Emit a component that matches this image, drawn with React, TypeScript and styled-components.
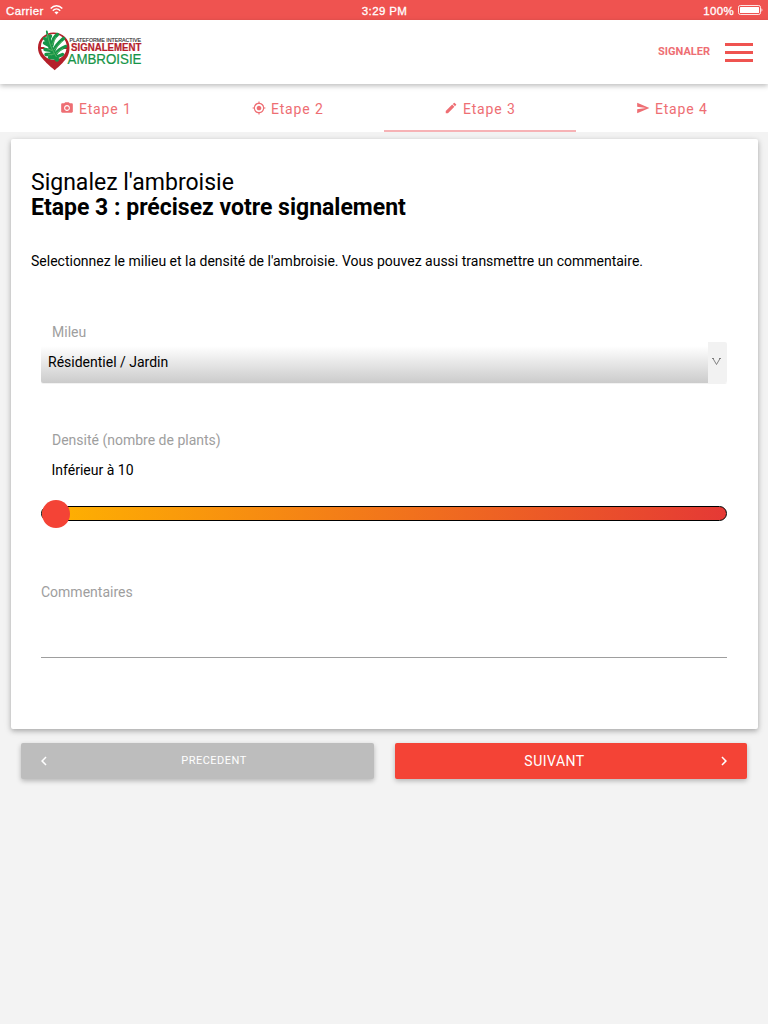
import { MdChevronLeft, MdChevronRight, MdEdit, MdGpsFixed, MdPhotoCamera, MdSend } from "react-icons/md";
import { IconType } from "react-icons";
import styled, { createGlobalStyle } from "styled-components";

const steps: { label: string; icon: IconType }[] = [
  { label: "Etape 1", icon: MdPhotoCamera },
  { label: "Etape 2", icon: MdGpsFixed },
  { label: "Etape 3", icon: MdEdit },
  { label: "Etape 4", icon: MdSend },
];

const Logo = () => (
  <svg width="106" height="44" viewBox="0 0 106 44" overflow="visible" fontFamily="'Liberation Sans', Arial, sans-serif">
    <path d="M16.500 2.500C7.500 2.500 1 9.500 1 17.500c0 7.500 4.500 11 8.500 15.500 3 3 5.800 5 8.200 7.300 2.300-2.300 5-4.300 7.800-7.300C29.500 28.500 32.500 25 32.500 17.500c0-8-6.500-15-16-15Z" fill="#b5202a" />
    <circle cx="16.800" cy="16.800" r="12.900" fill="#fff" />
    <path d="M1.500 18h6M27 18h5" stroke="#b5202a" strokeWidth="1.800" />
    <g fill="none" stroke="#169447" strokeLinecap="round" strokeLinejoin="round">
      <path d="M20 29.500C17 25 11.500 16 11.500 7" strokeWidth="4.500" />
      <path d="M11 8 9.800 1.500" strokeWidth="1.800" />
      <path d="M12 9l1.500-3M11.500 12 7.500 8.500M13 16l-5.500-3M15 15c.5-5 2-8 5.500-10.500M17 20c2-5 5-7.500 9.500-11.500M18.500 24c2.500-4 5-5.500 10-7.500M19.500 27l6-2.500M15 20.500l-7-1M17 24l-8 .5M19 28l-6.500-.5" strokeWidth="3.400" />
    </g>
    <path d="M10.500 4c1 8 4.500 16 9 23M15 15l4-8M17 20l8-9M19 23.500l7-5M15 20.500l-5-2M17 24l-6 1" stroke="#7cc576" strokeWidth=".6" fill="none" />
    <text x="32.500" y="11.500" fontSize="5" fill="#333" stroke="#333" strokeWidth=".15" textLength="71.500" lengthAdjust="spacingAndGlyphs">PLATEFORME INTERACTIVE</text>
    <text x="34" y="20.900" fontSize="10.200" fontWeight="700" fill="#b5202a" stroke="#b5202a" strokeWidth=".2" textLength="70.500" lengthAdjust="spacingAndGlyphs">SIGNALEMENT</text>
    <text x="30.500" y="33.500" fontSize="13.800" fill="#169447" stroke="#169447" strokeWidth=".2" textLength="74" lengthAdjust="spacingAndGlyphs">AMBROISIE</text>
  </svg>
);

const WifiIcon = () => (
  <svg width="13" height="10" viewBox="0 0 13 10" fill="none" stroke="#fff" strokeWidth="1.400">
    <path d="M.7 3.500C4-.2 9-.2 12.300 3.500M2.800 5.700c2.200-2.200 5.200-2.200 7.400 0" />
    <path d="M4.400 7.300 6.500 9.500l2.100-2.200c-1.200-1.100-3-1.100-4.200 0Z" fill="#fff" stroke="none" />
  </svg>
);

const BatteryIcon = () => (
  <svg width="25" height="10" viewBox="0 0 25 10">
    <rect x=".5" y=".5" width="22" height="9" rx="1.800" fill="none" stroke="#fff" strokeOpacity=".85" />
    <rect x="2" y="2" width="19" height="6" rx=".5" fill="#fff" />
    <path d="M23.500 3.300c1.200.5 1.200 2.900 0 3.400Z" fill="#fff" />
  </svg>
);

export default function App() {
  return (
    <>
      <GlobalStyle />
      <StatusBar>
        <StatusItem>
          Carrier <WifiIcon />
        </StatusItem>
        <StatusItem>3:29 PM</StatusItem>
        <StatusItem $end>
          100% <BatteryIcon />
        </StatusItem>
      </StatusBar>
      <Header>
        <Logo />
        <HeaderActions>
          <ReportLink>SIGNALER</ReportLink>
          <MenuButton aria-label="Menu">
            <span />
            <span />
            <span />
          </MenuButton>
        </HeaderActions>
      </Header>
      <Tabs>
        {steps.map(({ label, icon: Icon }, i) => (
          <Tab key={label} $active={i === 2}>
            <Icon size={14} />
            {label}
          </Tab>
        ))}
      </Tabs>
      <Card>
        <Title>
          Signalez l'ambroisie
          <br />
          <b>Etape 3 : précisez votre signalement</b>
        </Title>
        <Intro>Selectionnez le milieu et la densité de l'ambroisie. Vous pouvez aussi transmettre un commentaire.</Intro>
        <Form>
          <Label>Mileu</Label>
          <SelectField>
            <SelectValue>Résidentiel / Jardin</SelectValue>
            <SelectArrow>
              <svg width="9" height="7" viewBox="0 0 9 7" fill="none" stroke="#666" strokeWidth=".8">
                <path d="M0 .5h2M7 .5h2M1 .5l3.500 6L8 .5" />
              </svg>
            </SelectArrow>
          </SelectField>
          <DensityLabel>Densité (nombre de plants)</DensityLabel>
          <DensityValue>Inférieur à 10</DensityValue>
          <Slider>
            <Thumb />
          </Slider>
          <Comment>Commentaires</Comment>
        </Form>
      </Card>
      <Actions>
        <Button $small $color="#bdbdbd">
          <MdChevronLeft size={18} />
          <span>PRECEDENT</span>
        </Button>
        <Button $color="#f44336">
          <span>SUIVANT</span>
          <MdChevronRight size={18} />
        </Button>
      </Actions>
    </>
  );
}

const GlobalStyle = createGlobalStyle`
  * {
    box-sizing: border-box;
  }

  body {
    margin: 0;
    background: #f3f3f3;
    color: #000;
    font-family: Roboto, sans-serif;
    font-size: 14px;
  }
`;

const StatusBar = styled.div`
  display: grid;
  grid-template-columns: 1fr auto 1fr;
  height: 20px;
  padding: 2px 5px 0 6px;
  background: #ef5350;
  color: #fff;
  font-family: "Liberation Sans", Arial, sans-serif;
  font-size: 11.5px;
  letter-spacing: 0.35px;
  -webkit-text-stroke: 0.3px #fff;
`;

const StatusItem = styled.div<{ $end?: boolean }>`
  display: flex;
  align-items: center;
  justify-content: ${({ $end }) => ($end ? "flex-end" : "flex-start")};
  gap: ${({ $end }) => ($end ? 4 : 6)}px;

  svg {
    margin-top: -2px;
  }
`;

const Header = styled.header`
  position: relative;
  z-index: 1;
  display: flex;
  justify-content: space-between;
  height: 64px;
  padding: 10px 15px 0 37px;
  background: #fff;
  box-shadow: 0 2px 5px rgba(0, 0, 0, 0.26);
`;

const HeaderActions = styled.div`
  display: flex;
  gap: 15px;
  height: 45px;
  align-items: center;
`;

const ReportLink = styled.div`
  color: #ee6e73;
  font-size: 11px;
  font-weight: 700;
  line-height: 12px;
  margin-top: -2px;
`;

const MenuButton = styled.button`
  display: flex;
  flex-direction: column;
  gap: 5px;
  width: 28px;
  margin: 0;
  padding: 0;
  border: 0;
  background: none;

  span {
    width: 28px;
    height: 3px;
    background: #ef5350;
  }
`;

const Tabs = styled.nav`
  display: grid;
  grid-template-columns: repeat(4, 1fr);
  height: 48px;
  background: #fff;
`;

const Tab = styled.div<{ $active: boolean }>`
  display: flex;
  justify-content: center;
  gap: 4.5px;
  height: 48px;
  padding-top: 2px;
  border-bottom: 2px solid ${({ $active }) => ($active ? "#f6b2b5" : "transparent")};
  color: #ee6e73;
  letter-spacing: 0.85px;
  line-height: 46px;

  svg {
    margin-top: 15px;
  }
`;

const Card = styled.main`
  height: 590px;
  margin: 7px 10px 0 11px;
  padding: 31px 31px 0 20px;
  background: #fff;
  border-radius: 2px;
  box-shadow: 0 2px 5px rgba(0, 0, 0, 0.26), 0 2px 10px rgba(0, 0, 0, 0.08);
`;

const Title = styled.h1`
  margin: 0;
  font-size: 23px;
  font-weight: 400;
  line-height: 25px;

  b {
    font-weight: 700;
  }
`;

const Intro = styled.p`
  margin: 30px 0 0;
  line-height: 22px;
`;

const Form = styled.div`
  margin: 50px 0 0 10px;
`;

const Label = styled.div`
  padding-left: 11px;
  color: #9e9e9e;
  line-height: 20px;
`;

const SelectField = styled.div`
  display: flex;
  height: 42px;
  border-bottom: 1px solid #f2f2f2;
  border-radius: 2px;
`;

const SelectValue = styled.div`
  flex: 1;
  padding-left: 7px;
  border-radius: 2px 0 0 2px;
  background: linear-gradient(#fff 10%, #cbcbcb);
  line-height: 40px;
`;

const SelectArrow = styled.div`
  display: flex;
  align-items: center;
  justify-content: center;
  width: 19px;
  padding: 0 2px 3px 0;
  background: #f2f2f2;
  border-radius: 0 2px 2px 0;
`;

const DensityLabel = styled(Label)`
  margin-top: 46px;
`;

const DensityValue = styled.div`
  margin-top: 10px;
  padding-left: 10.5px;
  line-height: 20px;
`;

const Slider = styled.div`
  position: relative;
  height: 15px;
  margin-top: 26px;
  border: 1px solid #000;
  border-radius: 8px;
  background: linear-gradient(90deg, #ffb300, #e53935);
`;

const Thumb = styled.div`
  position: absolute;
  top: -7px;
  left: 0;
  width: 28px;
  height: 28px;
  border-radius: 50%;
  background: #f44336;
`;

const Comment = styled.div`
  height: 76px;
  margin-top: 61px;
  border-bottom: 1px solid #9e9e9e;
  color: #9e9e9e;
  line-height: 20px;
`;

const Actions = styled.div`
  display: grid;
  grid-template-columns: 353px 352px;
  gap: 21px;
  padding: 14px 21px;
`;

const Button = styled.button<{ $color: string; $small?: boolean }>`
  display: flex;
  align-items: center;
  height: 36px;
  padding: ${({ $small }) => ($small ? "0 0 0 14px" : "0 14px 0 0")};
  border: 0;
  border-radius: 2px;
  background: ${({ $color }) => $color};
  box-shadow: 0 2px 5px rgba(0, 0, 0, 0.26);
  color: #fff;
  font-family: inherit;
  font-size: ${({ $small }) => ($small ? 11 : 14)}px;
  letter-spacing: 0.5px;

  span {
    flex: 1;
    padding-left: ${({ $small }) => ($small ? 1 : 0)}px;
    padding-right: ${({ $small }) => ($small ? 0 : 1)}px;
    text-align: center;
    margin-top: ${({ $small }) => ($small ? -1 : 0)}px;
  }
`;
